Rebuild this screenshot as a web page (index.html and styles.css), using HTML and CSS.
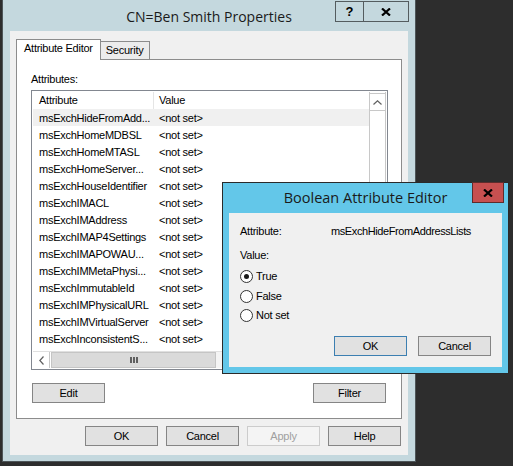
FILE: index.html
```html
<!DOCTYPE html>
<html>
<head>
<meta charset="utf-8">
<title>CN=Ben Smith Properties</title>
<link rel="stylesheet" href="styles.css">
</head>
<body>
<div class="desktop">
  <div class="window">
    <div class="titlebar">
      <div></div>
      <div class="title">CN=Ben Smith Properties</div>
      <div class="caption-btns">
        <div class="cbtn help">?</div>
        <div class="cbtn close">
          <svg width="10" height="8" viewBox="0 0 10 8"><path d="M1 0.5 L9 7.5 M9 0.5 L1 7.5" stroke="#000" stroke-width="2.2" fill="none"/></svg>
        </div>
      </div>
    </div>
    <div class="client">
      <div class="tabs">
        <div class="tab active">Attribute Editor</div>
        <div class="tab">Security</div>
      </div>
      <div class="panel">
        <div class="label">Attributes:</div>
        <div class="listbox">
          <div class="list-main">
            <div class="list-header"><div class="c1">Attribute</div><div class="c2 hc2">Value</div></div>
            <div class="row hl"><div class="c1">msExchHideFromAdd...</div><div class="c2">&lt;not set&gt;</div></div>
            <div class="row"><div class="c1">msExchHomeMDBSL</div><div class="c2">&lt;not set&gt;</div></div>
            <div class="row"><div class="c1">msExchHomeMTASL</div><div class="c2">&lt;not set&gt;</div></div>
            <div class="row"><div class="c1">msExchHomeServer...</div><div class="c2">&lt;not set&gt;</div></div>
            <div class="row"><div class="c1">msExchHouseIdentifier</div><div class="c2">&lt;not set&gt;</div></div>
            <div class="row"><div class="c1">msExchIMACL</div><div class="c2">&lt;not set&gt;</div></div>
            <div class="row"><div class="c1">msExchIMAddress</div><div class="c2">&lt;not set&gt;</div></div>
            <div class="row"><div class="c1">msExchIMAP4Settings</div><div class="c2">&lt;not set&gt;</div></div>
            <div class="row"><div class="c1">msExchIMAPOWAU...</div><div class="c2">&lt;not set&gt;</div></div>
            <div class="row"><div class="c1">msExchIMMetaPhysi...</div><div class="c2">&lt;not set&gt;</div></div>
            <div class="row"><div class="c1">msExchImmutableId</div><div class="c2">&lt;not set&gt;</div></div>
            <div class="row"><div class="c1">msExchIMPhysicalURL</div><div class="c2">&lt;not set&gt;</div></div>
            <div class="row"><div class="c1">msExchIMVirtualServer</div><div class="c2">&lt;not set&gt;</div></div>
            <div class="row"><div class="c1">msExchInconsistentS...</div><div class="c2">&lt;not set&gt;</div></div>
          </div>
          <div class="vscroll">
            <div class="sbtn up">
              <svg width="9" height="5" viewBox="0 0 9 5"><path d="M0.5 4.5 L4.5 0.8 L8.5 4.5" stroke="#606060" stroke-width="1.2" fill="none"/></svg>
            </div>
            <div class="vtrack"></div>
          </div>
          <div class="hscroll">
            <div class="sbtn left">
              <svg width="5" height="9" viewBox="0 0 5 9"><path d="M4.5 0.5 L0.8 4.5 L4.5 8.5" stroke="#606060" stroke-width="1.2" fill="none"/></svg>
            </div>
            <div class="hthumb">
              <svg width="8" height="6" viewBox="0 0 8 6"><rect x="0" y="0" width="2" height="6" fill="#606060"/><rect x="3" y="0" width="2" height="6" fill="#606060"/><rect x="6" y="0" width="2" height="6" fill="#606060"/></svg>
            </div>
            <div class="htrack"></div>
          </div>
          <div class="corner"></div>
        </div>
        <div class="panel-btns">
          <button class="btn">Edit</button>
          <button class="btn">Filter</button>
        </div>
      </div>
      <div class="bottom-btns">
        <button class="btn">OK</button>
        <button class="btn">Cancel</button>
        <button class="btn disabled">Apply</button>
        <button class="btn">Help</button>
      </div>
    </div>
  </div>

  <div class="dialog">
    <div class="dtitlebar">
      <div></div>
      <div class="dtitle">Boolean Attribute Editor</div>
      <div class="dclose">
        <svg width="10" height="8" viewBox="0 0 10 8"><path d="M1 0.5 L9 7.5 M9 0.5 L1 7.5" stroke="#000" stroke-width="2.2" fill="none"/></svg>
      </div>
    </div>
    <div class="dclient">
      <div class="attr-line"><div class="attr-label">Attribute:</div><div class="attr-value">msExchHideFromAddressLists</div></div>
      <div class="value-label">Value:</div>
      <div class="radios">
        <div class="radio-row"><span class="radio checked"></span><span class="rlabel">True</span></div>
        <div class="radio-row"><span class="radio"></span><span class="rlabel">False</span></div>
        <div class="radio-row"><span class="radio"></span><span class="rlabel">Not set</span></div>
      </div>
      <div class="dbtns">
        <button class="btn default">OK</button>
        <button class="btn">Cancel</button>
      </div>
    </div>
  </div>
</div>
</body>
</html>
```

FILE: styles.css
```css
html, body {
  margin: 0;
  padding: 0;
}
body {
  background: #2d2d2d;
  width: 513px;
  height: 466px;
  overflow: hidden;
  font-family: "Liberation Sans", Arial, sans-serif;
  font-size: 11px;
  letter-spacing: -0.25px;
  color: #000;
}
.desktop {
  position: relative;
  width: 513px;
  height: 466px;
}

/* main window */
.window {
  margin-left: 2px;
  width: 412px;
  border: 1px solid #4d5558;
  border-top: none;
  background: #c4d8de;
  padding-bottom: 6px;
}
.titlebar {
  height: 31px;
  display: grid;
  grid-template-columns: 1fr auto 1fr;
}
.title {
  font-family: "Open Sans", "Noto Sans", sans-serif;
  font-size: 14px;
  letter-spacing: 0;
  line-height: 31px;
  padding-top: 1px;
  color: #1a1a1a;
  white-space: nowrap;
}
.caption-btns {
  justify-self: end;
  align-self: start;
  display: flex;
  margin-top: 1px;
  margin-right: 6px;
}
.cbtn {
  box-sizing: border-box;
  height: 21px;
  border: 1px solid #545c5f;
  display: flex;
  align-items: center;
  justify-content: center;
}
.cbtn.help {
  width: 28px;
  border-right: none;
  font-weight: bold;
  font-size: 13px;
  letter-spacing: 0;
}
.cbtn.close {
  width: 46px;
}

.client {
  margin: 0 7px;
  height: 424px;
  box-sizing: border-box;
  background: #f0f0f0;
  padding: 8px 6px 0 6px;
}

/* tabs */
.tabs {
  display: flex;
  align-items: flex-end;
  height: 21px;
  margin-bottom: -1px;
  position: relative;
  z-index: 1;
}
.tab {
  box-sizing: border-box;
  height: 18px;
  margin-bottom: 1px;
  border: 1px solid #8c8c8c;
  border-bottom: none;
  background: #ececec;
  padding: 2px 5px 0 5px;
  margin-left: -1px;
  line-height: 13px;
  white-space: nowrap;
}
.tab.active {
  height: 21px;
  margin-bottom: 0;
  margin-left: 0;
  background: #fff;
  padding: 2px 7px 0 7px;
  position: relative;
  z-index: 2;
}

.panel {
  box-sizing: border-box;
  height: 360px;
  border: 1px solid #8c8c8c;
  background: #fff;
  padding: 13px 13px 0 14px;
}
.label {
  line-height: 13px;
}

/* list box */
.listbox {
  margin-top: 4px;
  box-sizing: border-box;
  height: 280px;
  border: 1px solid #828790;
  padding: 1px;
  display: grid;
  grid-template-columns: 1fr 17px;
  grid-template-rows: 1fr 17px;
  background: #fff;
}
.list-main {
  overflow: hidden;
}
.list-header, .row {
  display: flex;
  height: 17px;
  white-space: nowrap;
}
.list-header {
  line-height: 17px;
}
.row {
  box-sizing: border-box;
  padding-top: 1px;
  line-height: 16px;
}
.row.hl {
  background: #f0f0f0;
}
.c1 {
  width: 120px;
  box-sizing: border-box;
  padding-left: 6px;
  overflow: hidden;
}
.c2 {
  padding-left: 6px;
}
.hc2 {
  border-left: 1px solid #e5e5e5;
  padding-left: 5px;
}

.vscroll {
  box-sizing: border-box;
  border-left: 1px solid #c8c8c8;
  border-right: 1px solid #c8c8c8;
  display: flex;
  flex-direction: column;
}
.sbtn {
  display: flex;
  align-items: center;
  justify-content: center;
  background: #fff;
}
.sbtn.up {
  height: 16px;
  border-top: 1px solid #c8c8c8;
  border-bottom: 1px solid #c8c8c8;
  margin-top: 1px;
}
.vtrack {
  flex: 1;
}
.hscroll {
  display: flex;
  box-sizing: border-box;
  border-top: 1px solid #e0e0e0;
}
.sbtn.left {
  width: 16px;
  border-right: 1px solid #c8c8c8;
}
.hthumb {
  box-sizing: border-box;
  width: 165px;
  margin-left: 1px;
  background: #dadada;
  border: 1px solid #c5c5c5;
  display: flex;
  align-items: center;
  justify-content: center;
}
.htrack {
  flex: 1;
  background: #f4f4f4;
}
.corner {
  background: #f0f0f0;
}

/* buttons */
.btn {
  box-sizing: border-box;
  width: 73px;
  height: 20px;
  margin: 0;
  padding: 0;
  border: 1px solid #858585;
  background: #e1e1e1;
  font-family: "Liberation Sans", Arial, sans-serif;
  font-size: 11px;
  letter-spacing: -0.25px;
  color: #000;
  line-height: 18px;
  text-align: center;
}
.btn.disabled {
  background: #f4f4f4;
  border-color: #cccccc;
  color: #a0a0a0;
}
.btn.default {
  border-color: #3c7fb1;
}
.panel-btns {
  display: flex;
  justify-content: space-between;
  margin: 13px 2px 0 1px;
}
.bottom-btns {
  display: flex;
  justify-content: flex-end;
  gap: 8px;
  margin-top: 7px;
  padding-right: 1px;
}

/* boolean dialog */
.dialog {
  position: absolute;
  left: 222px;
  top: 182px;
  width: 287px;
  height: 192px;
  box-sizing: border-box;
  border: 1px solid #2a2a2a;
  background: #63c7e9;
  padding: 0 6px 6px 6px;
  display: flex;
  flex-direction: column;
  z-index: 5;
}
.dtitlebar {
  height: 30px;
  margin: 0 -6px;
  display: grid;
  grid-template-columns: 1fr auto 1fr;
}
.dtitle {
  font-family: "Open Sans", "Noto Sans", sans-serif;
  font-size: 14.5px;
  letter-spacing: 0;
  line-height: 30px;
  color: #1a1a1a;
  white-space: nowrap;
}
.dclose {
  justify-self: end;
  align-self: start;
  margin-top: -1px;
  margin-right: 4px;
  box-sizing: border-box;
  width: 32px;
  height: 21px;
  background: #c75050;
  border: 1px solid #5e2c2c;
  display: flex;
  align-items: center;
  justify-content: center;
}
.dclient {
  flex: 1;
  background: #f0f0f0;
  padding: 12px 11px 0 11px;
  display: flex;
  flex-direction: column;
}
.attr-line {
  display: grid;
  grid-template-columns: 91px 1fr;
  line-height: 13px;
  white-space: nowrap;
}
.attr-value {
  letter-spacing: -0.4px;
}
.value-label {
  margin-top: 11px;
  line-height: 13px;
}
.radios {
  margin-top: 5px;
}
.radio-row {
  display: flex;
  align-items: center;
  height: 19.5px;
}
.radio {
  box-sizing: border-box;
  width: 13px;
  height: 13px;
  border: 1px solid #333;
  border-radius: 50%;
  background: #fff;
  display: flex;
  align-items: center;
  justify-content: center;
}
.radio.checked::after {
  content: "";
  width: 5px;
  height: 5px;
  border-radius: 50%;
  background: #1a1a1a;
}
.rlabel {
  margin-left: 3px;
  line-height: 13px;
}
.dbtns {
  display: flex;
  justify-content: flex-end;
  gap: 11px;
  margin-top: 10px;
}
```
